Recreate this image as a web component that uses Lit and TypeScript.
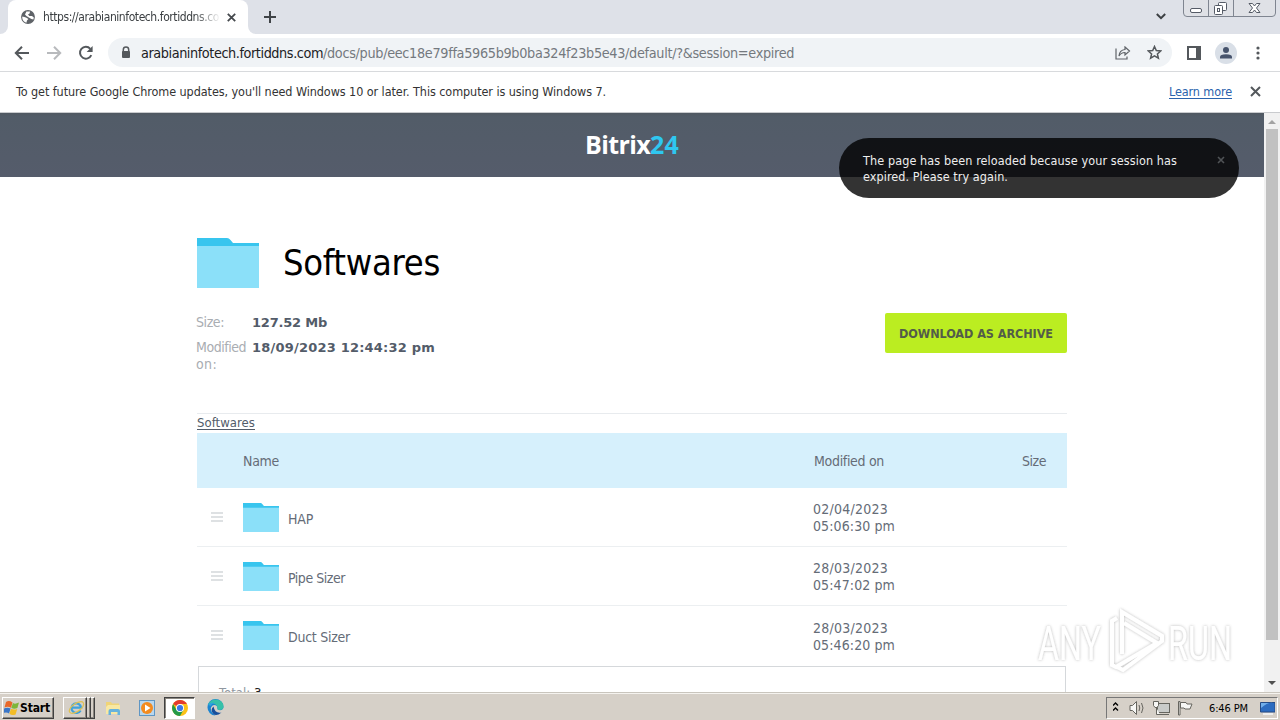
import { LitElement, html, css } from "lit";
import { customElement, property } from "lit/decorators.js";

/** One line of text whose tracking is adjusted so that it spans `w` pixels. */
@customElement("fit-text")
class FitText extends LitElement {
  @property({ type: Number }) w = 0;
  static styles = css`
    :host { display: inline-block; white-space: nowrap; }
    :host(.ul) .run { text-decoration: underline; text-underline-offset: 2px; text-decoration-thickness: 1px; }
    .run { display: inline-block; white-space: pre; }
  `;
  render() {
    return html`<span class="run"><slot></slot></span>`;
  }
  firstUpdated() {
    const run = this.renderRoot.querySelector(".run") as HTMLElement;
    const n = (this.textContent || "").length;
    if (!this.w || !n) return;
    const natural = run.getBoundingClientRect().width;
    this.style.letterSpacing = `${(this.w - natural) / n}px`;
    this.style.width = `${this.w}px`;
  }
}

const rows = [
  { name: "HAP", w: 25, date: "02/04/2023", time: "05:06:30 pm" },
  { name: "Pipe Sizer", w: 57, date: "28/03/2023", time: "05:47:02 pm" },
  { name: "Duct Sizer", w: 62, date: "28/03/2023", time: "05:46:20 pm" },
];

const folder = (cls: string) => html`
  <svg class=${cls} viewBox="0 0 62 50" preserveAspectRatio="none">
    <path fill="#38c5ee" d="M0 0H30Q32 0 33.5 2L36 5H62V12H0Z" />
    <path fill="#8be0f9" d="M0 8H62V50H0Z" />
  </svg>`;

@customElement("app-root")
class AppRoot extends LitElement {
  static styles = css`
    :host {
      display: flex; flex-direction: column; width: 1280px; height: 720px; overflow: hidden; position: relative;
      background: #fff; color: #333;
      font-family: "DejaVu Sans Condensed", "DejaVu Sans", Verdana, sans-serif; font-stretch: condensed;
      font-size: 12px;
    }
    * { box-sizing: border-box; }
    svg { display: block; flex: none; }
    .tabs { height: 34px; flex: none; background: #dee1e8; display: flex; align-items: flex-start; }
    .tabedge { width: 8px; height: 34px; background: #fff; }
    .tabedge i { display: block; height: 34px; background: #dee1e8; border-radius: 0 0 8px 0; }
    .tabedge.r i { border-radius: 0 0 0 8px; }
    .tab { width: 240px; height: 34px; background: #fff; border-radius: 8px 8px 0 0; display: flex; align-items: center; padding-left: 13px; }
    .tabtext { width: 176px; margin: 0 8px; overflow: hidden; color: #3c4043; line-height: 18px; height: 18px;
      -webkit-mask-image: linear-gradient(90deg, #000 86%, transparent 101%); mask-image: linear-gradient(90deg, #000 86%, transparent 101%); }
    .plus { margin: 11px 0 0 8px; }
    .chev { margin: 13px 17px 0 auto; }
    .win { width: 93px; height: 17px; margin-right: 4px; }
    .toolbar { height: 38px; flex: none; border-bottom: 1px solid #d8dadd; display: flex; align-items: center; padding-left: 14px; background: #fff; }
    .nav { margin-right: 16px; }
    .omni { flex: none; width: 1064px; height: 29px; margin-left: -2px; border-radius: 15px; background: #f0f3f6; display: flex; align-items: center; padding-left: 12px; }
    .url { margin-left: 9px; font-size: 14.3px; line-height: 20px; color: #74797e; display: flex; }
    .host { color: #202124; }
    .share { margin-left: auto; margin-right: 16px; }
    .star { margin-right: 10px; }
    .side { margin-left: 15px; }
    .avatar { margin-left: 14px; }
    .dots { margin-left: 19px; }
    .info { height: 41px; flex: none; display: flex; align-items: center; padding: 0 19px 2px 16px; border-bottom: 1px solid #c9cbce; font-size: 12.5px; }
    .learn { margin-left: auto; margin-right: 18px; color: #2a63ad; }
    .view { height: 579px; flex: none; display: flex; overflow: hidden; }
    .page { width: 1264px; }
    .head { height: 64px; background: linear-gradient(#505861 0, #525c68 4px, #555c6b 100%); display: flex; justify-content: center; align-items: center;
      font: 700 25px "Open Sans", sans-serif; color: #fff; padding-bottom: 2px; }
    .num { color: #2fc7f0; }
    .content { width: 870px; margin-left: 197px; }
    .title { display: flex; align-items: center; padding-top: 60px; height: 111px; }
    .bigfolder { width: 62px; height: 50px; }
    .name { margin: 1px 0 0 24px; font-size: 36px; line-height: 44px; color: #000; }
    .meta { display: flex; justify-content: space-between; height: 125px; padding-top: 25px; }
    .facts { display: grid; grid-template-columns: 56px auto; grid-template-rows: 25px 17px; font-size: 14px; line-height: 17px; align-content: start; color: #a9adb2; padding-top: 1px; margin-left: -1px; }
    .facts b { color: #535c69; font-family: "DejaVu Sans", Verdana, sans-serif; font-stretch: normal; font-size: 13px; }
    .btn { width: 182px; height: 40px; background: #bbed21; border-radius: 2px; color: #535c49; font-weight: 700; font-size: 12.5px; display: flex; align-items: center; justify-content: center; padding-top: 1px; }
    .crumb { border-top: 1px solid #e8ebee; height: 20px; line-height: 18px; font-size: 13px; color: #535c69; }
    .row { display: grid; grid-template-columns: 46px 571px 208px auto; align-items: center; font-size: 14px; color: #656c77; height: 59px; border-bottom: 1px solid #eceff1; }
    .row.th { background: #d6f0fc; border: 0; height: 55px; padding-top: 1px; }
    .row.last { border-bottom-color: transparent; margin-bottom: 1px; }
    .cell { display: flex; align-items: center; }
    .smallfolder { width: 36px; height: 29px; margin-right: 9px; }
    .lbl { padding-top: 4px; }
    .when { line-height: 17px; display: flex; flex-direction: column; padding-top: 2px; margin-left: -1px; }
    .last .when { padding-top: 4px; }
    .grip { margin-left: 14px; }
    .total { width: 868px; height: 60px; margin-left: 1px; border: 1px solid #d5d8db; padding: 17px 0 0 20px; font-size: 13px; line-height: 18px; color: #9097a0; }
    .total b { color: #222; font-weight: 400; }
    .scroll { width: 16px; background: #f1f1f1; display: flex; flex-direction: column; align-items: center; }
    .thumb { width: 12px; height: 511px; background: #c1c1c1; margin-bottom: auto; }
    .toast { position: absolute; left: 839px; top: 138px; width: 400px; height: 60px; border-radius: 30px; background: rgba(0, 0, 0, .8); color: #eee; padding: 15px 14px 0 24px; display: flex; justify-content: space-between; font-size: 12.5px; line-height: 16px; }
    .lines { display: flex; flex-direction: column; align-items: flex-start; }
    .tx { margin-top: 3px; }
    .mark { position: absolute; left: 1030px; top: 604px; }
    .marktext { font: 400 48px Roboto, sans-serif; }
    .task { height: 28px; flex: none; background: #d6d0c8; border-top: 1px solid #c9c5bd; box-shadow: inset 0 1px #f5f3ef; display: flex; align-items: center; padding: 2px 2px 0; color: #000; }
    .raised { border: 1px solid; border-color: #fff #404040 #404040 #fff; box-shadow: inset -1px -1px #8a867f; background: #d6d0c8; display: flex; align-items: center; height: 22px; }
    .start { width: 52px; font-weight: 700; padding-left: 1px; gap: 1px; }
    .ie { width: 24px; margin-left: 9px; padding-left: 4px; }
    .ie2 { width: 4px; border-left: 0; }
    .q { margin-left: 10px; }
    .wmp { margin-left: 17px; }
    .edge { margin-left: 12px; }
    .active { width: 31px; height: 22px; margin-left: 9px; background: #fff; border: 1px solid; border-color: #404040 #fff #fff #404040; box-shadow: inset 1px 1px #8a867f; display: flex; align-items: center; justify-content: center; }
    .tray { margin-left: auto; width: 172px; height: 22px; border: 1px solid; border-color: #777 #fff #fff #777; display: flex; align-items: center; padding-left: 6px; font-size: 11px; }
  `;

  browser() {
    return html`
      <div class="tabs">
        <div class="tabedge"><i></i></div>
        <div class="tab">
          <svg width="14" height="14" viewBox="0 0 14 14"><circle cx="7" cy="7" r="6.2" fill="#5f6368" stroke="#5f6368" stroke-width="1.4"/><path fill="#fff" d="M1.4 6.4 5 7.6 7.4 9 6 10.4 5.4 12.8A6 6 0 0 1 1.2 7.8ZM5.4 1.4 9 1.6 8.6 3.4 7 4.4 8.4 6H11L12.8 7.4 12.4 9.6 10.4 9 8.2 7.8 5.4 6 4 4.4Z"/></svg>
          <div class="tabtext"><fit-text w="186">https://arabianinfotech.fortiddns.com</fit-text></div>
          <svg width="9" height="9" viewBox="0 0 9 9"><path d="M.8.8 8.2 8.2M8.2.8.8 8.2" stroke="#45494d" stroke-width="1.8"/></svg>
        </div>
        <div class="tabedge r"><i></i></div>
        <svg class="plus" width="12" height="12" viewBox="0 0 12 12"><path d="M6 0V12M0 6H12" stroke="#3f4347" stroke-width="2"/></svg>
        <svg class="chev" width="10" height="7" viewBox="0 0 10 7"><path d="M.8 1 5 5.2 9.2 1" fill="none" stroke="#3c4043" stroke-width="2"/></svg>
        <svg class="win" viewBox="0 0 93 17"><path d="M.5 0V13Q.5 16.500 4 16.500H89Q92.500 16.500 92.500 13V0M25.500 0V16M50.500 0V16" fill="#dfe1e6" stroke="#7f8590"/><g fill="#fff" stroke="#555b66"><rect x="7.500" y="8.500" width="11" height="4" rx="1.500"/><rect x="35.500" y="2.500" width="8" height="8" rx="1"/><rect x="31.500" y="5.500" width="8" height="9" rx="1"/><rect x="34.500" y="8.500" width="2" height="3"/><path d="M66 3.500H69.500L71.500 6 73.500 3.500H77L73.500 8 77 12.500H73.500L71.500 10 69.500 12.500H66L69.500 8Z"/></g></svg>
      </div>
      <div class="toolbar">
        <svg class="nav" width="16" height="16" viewBox="0 0 16 16"><path d="M15 8H2.500M8 1.800 1.800 8 8 14.200" fill="none" stroke="#54585c" stroke-width="2"/></svg>
        <svg class="nav" width="16" height="16" viewBox="0 0 16 16"><path d="M1 8H13.500M8 1.800 14.200 8 8 14.200" fill="none" stroke="#b8babd" stroke-width="2"/></svg>
        <svg class="nav" width="16" height="16" viewBox="0 0 16 16"><path d="M13.300 10.200A5.900 5.900 0 1 1 12.300 3.800" fill="none" stroke="#54585c" stroke-width="2"/><path d="M14.600 1V7H8.600Z" fill="#54585c"/></svg>
        <div class="omni">
          <svg width="12" height="14" viewBox="0 0 12 14"><path d="M3.300 6V3.700a2.700 2.700 0 0 1 5.400 0V6" fill="none" stroke="#54585c" stroke-width="1.500"/><rect x="2" y="5" width="8" height="7" rx="1" fill="#54585c"/></svg>
          <div class="url"><fit-text class="host" w="182">arabianinfotech.fortiddns.com</fit-text><fit-text w="471">/docs/pub/eec18e79ffa5965b9b0ba324f23b5e43/default/?&amp;session=expired</fit-text></div>
          <svg class="share" width="16" height="14" viewBox="0 0 16 14"><path d="M1 2.500V13H12V10.500M10 1 14.500 5 10 9V6.500Q6 6.500 4 10 4.500 4 10 3.500Z" fill="none" stroke="#5f6368" stroke-width="1.200"/></svg>
          <svg class="star" width="15" height="15" viewBox="0 0 15 15"><path d="M7.500 1.500 9.300 5.600 13.700 6 10.400 8.900 11.400 13.200 7.500 10.900 3.600 13.200 4.600 8.900 1.300 6 5.700 5.600Z" fill="none" stroke="#54585c" stroke-width="1.500"/></svg>
        </div>
        <svg class="side" width="14" height="14" viewBox="0 0 14 14"><rect x="1" y="1" width="12" height="12" fill="#fff" stroke="#54585c" stroke-width="2"/><rect x="9" y="1" width="4" height="12" fill="#54585c"/></svg>
        <svg class="avatar" width="22" height="22" viewBox="0 0 22 22"><circle cx="11" cy="11" r="11" fill="#d9dfe7"/><circle cx="11" cy="8" r="3" fill="#46536c"/><path d="M5 16.500V15Q5 12.200 11 12.200T17 15V16.500Z" fill="#46536c"/></svg>
        <svg class="dots" width="4" height="14" viewBox="0 0 4 14"><g fill="#54585c"><circle cx="2" cy="2" r="1.600"/><circle cx="2" cy="7" r="1.600"/><circle cx="2" cy="12" r="1.600"/></g></svg>
      </div>
      <div class="info">
        <fit-text w="590">To get future Google Chrome updates, you'll need Windows 10 or later. This computer is using Windows 7.</fit-text>
        <fit-text class="learn ul" w="63">Learn more</fit-text>
        <svg width="11" height="11" viewBox="0 0 11 11"><path d="M1 1 10 10M10 1 1 10" stroke="#54585c" stroke-width="2"/></svg>
      </div>`;
  }

  taskbar() {
    return html`
      <div class="task">
        <div class="raised start">
          <svg width="15" height="16" viewBox="0 0 15 16"><path d="M2 2Q5 0 8.500 2.500L7 7.800Q4 6 .5 7.500Z" fill="#e8682a"/><path d="M9 3Q11 4.500 15 2.500L13.400 8Q10 9.500 7.300 7.800Z" fill="#7db63a"/><path d="M.3 8.300Q4 7 6.600 8.600L5 13.500Q3 12-.8 13Z" fill="#3a76c8"/><path d="M7 8.800Q10 10.300 13.200 9L11.600 14.500Q8 16 5.400 13.800Z" fill="#f3bd27"/></svg>
          <fit-text w="30">Start</fit-text>
        </div>
        <div class="raised ie">
          <svg width="17" height="17" viewBox="0 0 17 17"><path d="M12.600 11.400A4.800 4.800 0 1 1 13.100 8.600H4.500" fill="none" stroke="#3fa2dc" stroke-width="2.200"/><ellipse cx="8.500" cy="8.500" rx="8.300" ry="4" transform="rotate(-35 8.500 8.500)" fill="none" stroke="#e0c150" stroke-width="1.200"/></svg>
        </div><div class="raised ie2"></div><div class="raised ie2"></div>
        <svg class="q" width="17" height="16" viewBox="0 0 17 16"><path d="M1 2H6L7 3.500H14V13H1Z" fill="#f0d477"/><path d="M3 5H15V14H1V7Z" fill="#f8e8a3"/><path d="M3.500 15V11Q3.500 9 5.500 9H13Q15 9 15 11V15H12.500V12H6V15Z" fill="#67b3dd"/></svg>
        <svg class="wmp" width="16" height="16" viewBox="0 0 16 16"><rect x=".5" y=".5" width="15" height="15" fill="#b9d7ee" stroke="#5f96c4"/><circle cx="8" cy="8" r="6" fill="#f38b20"/><path d="M6 4.500 11.500 8 6 11.500Z" fill="#fff"/></svg>
        <div class="active">
          <svg width="16" height="16" viewBox="0 0 16 16"><circle cx="8" cy="8" r="8" fill="#fbc116"/><path d="M8 8 1.100 4A8 8 0 0 1 14.900 4H8Z" fill="#e33b2e"/><path d="M1.100 4A8 8 0 0 0 8 16L11.500 10H4.500Z" fill="#249a49"/><circle cx="8" cy="8" r="4" fill="#fff"/><circle cx="8" cy="8" r="3.100" fill="#3b78e7"/></svg>
        </div>
        <svg class="edge" width="17" height="17" viewBox="0 0 17 17"><path d="M.5 8A8 8 0 0 1 16.500 8Q16.300 11 13 11.200 10 11 10.400 9.500 10.500 6 7 6 5 6 4 8.500 3 13 8.500 16.500A8 8 0 0 1 .5 8Z" fill="#1d84d0"/><path d="M1 6Q3 .5 9 .5 16.500 1 16.500 8 16 11 12.500 11 10 11 10.500 9 10 4.500 5 4.500 2.500 4.500 1 6Z" fill="#37c1a8"/><path d="M1 6Q4 2.500 8 4 5 4 4 7Z" fill="#2aa6de"/><path d="M6.500 7.500Q3 10.500 6 14.500 9 18 14.500 13.500 8 15 6.500 7.500Z" fill="#174f9c"/></svg>
        <div class="tray">
          <svg width="162" height="18" viewBox="0 0 162 18">
            <path d="M0 6.500 2.500 4 5 6.500M0 11.500 2.500 9 5 11.500" fill="none" stroke="#000" stroke-width="1.400"/>
            <g fill="#f7f7f5" stroke="#66655f"><path d="M17 6.500H19.500L23.500 2.500V15.500L19.500 11.500H17Z"/><path d="M26 6Q27.500 9 26 12M28.500 4Q31.500 9 28.500 14" fill="none"/><rect x="44.500" y="4.500" width="12" height="9" fill="#c9cbc9"/><path d="M46 15.500H56M43.500 9V15.500H47M40.500 2.500H45.500V6.500L44 8.500H42L40.500 6.500Z"/><path d="M65.500 16V2.500H67V16ZM67.500 3.500H73L74 5H79L77 10H72L71 9H67.500Z"/></g>
            <path d="M147.500 3.500H162V13H147.500Z" fill="#2c6cc0" stroke="#244b86"/><path d="M148 9Q155 3 160 4H148Z" fill="#70aeea"/><path d="M150 15H160" stroke="#eee" stroke-width="2"/>
            <text x="96" y="12.500" textLength="39" font-size="11" fill="#000">6:46 PM</text>
          </svg>
        </div>
      </div>`;
  }

  render() {
    return html`
      ${this.browser()}
      <div class="view">
        <div class="page">
          <div class="head"><fit-text w="65">Bitrix</fit-text><fit-text class="num" w="29">24</fit-text></div>
          <div class="content">
            <div class="title">${folder("bigfolder")}<fit-text class="name" w="157">Softwares</fit-text></div>
            <div class="meta">
              <div class="facts">
                <fit-text w="28">Size:</fit-text><b><fit-text w="75">127.52 Mb</fit-text></b>
                <fit-text w="50">Modified</fit-text><b><fit-text w="183">18/09/2023 12:44:32 pm</fit-text></b>
                <fit-text w="21">on:</fit-text>
              </div>
              <div class="btn"><fit-text w="154">DOWNLOAD AS ARCHIVE</fit-text></div>
            </div>
            <div class="crumb"><fit-text class="ul" w="58">Softwares</fit-text></div>
            <div class="row th"><span></span><fit-text w="36">Name</fit-text><fit-text w="70">Modified on</fit-text><fit-text w="24">Size</fit-text></div>
            ${rows.map((r, i) => html`
              <div class="row ${i === 2 ? "last" : ""}">
                <svg class="grip" width="12" height="10" viewBox="0 0 12 10"><path d="M0 1H12M0 5H12M0 9H12" stroke="#d3d7da" stroke-width="1.500"/></svg>
                <div class="cell">${folder("smallfolder")}<span class="lbl"><fit-text w=${r.w}>${r.name}</fit-text></span></div>
                <div class="when"><fit-text w="75">${r.date}</fit-text><fit-text w="82">${r.time}</fit-text></div>
              </div>`)}
            <div class="total"><fit-text w="35">Total: </fit-text><b>3</b></div>
          </div>
        </div>
        <div class="scroll">
          <svg width="16" height="16" viewBox="0 0 16 16"><path d="M4 11 8 7 12 11Z" fill="#a3a3a3"/></svg>
          <div class="thumb"></div>
          <svg width="16" height="17" viewBox="0 0 16 17"><path d="M4 6H12L8 10Z" fill="#505050"/></svg>
        </div>
      </div>
      ${this.taskbar()}
      <div class="toast">
        <div class="lines"><fit-text w="314">The page has been reloaded because your session has</fit-text><fit-text w="145">expired. Please try again.</fit-text></div>
        <svg class="tx" width="8" height="8" viewBox="0 0 8 8"><path d="M1 1 7 7M7 1 1 7" stroke="#505356" stroke-width="1.600"/></svg>
      </div>
      <svg class="mark" width="210" height="76" viewBox="0 0 210 76">
        <defs><filter id="soft" x="-10%" y="-10%" width="120%" height="120%"><feDropShadow dx="0" dy="0" stdDeviation="1.800" flood-color="#777" flood-opacity=".6"/></filter></defs>
        <g filter="url(#soft)" fill="#fff" opacity=".85">
          <text class="marktext" x="8" y="56" textLength="63" lengthAdjust="spacingAndGlyphs">ANY</text>
          <text class="marktext" x="138" y="56" textLength="64" lengthAdjust="spacingAndGlyphs">RUN</text>
          <path d="M87 14 82 17V61L86 63 127 39 94 19M92 50V8L132 32V37L93 66 87 63" fill="none" stroke="#fff" stroke-width="4" />
        </g>
      </svg>`;
  }
}
